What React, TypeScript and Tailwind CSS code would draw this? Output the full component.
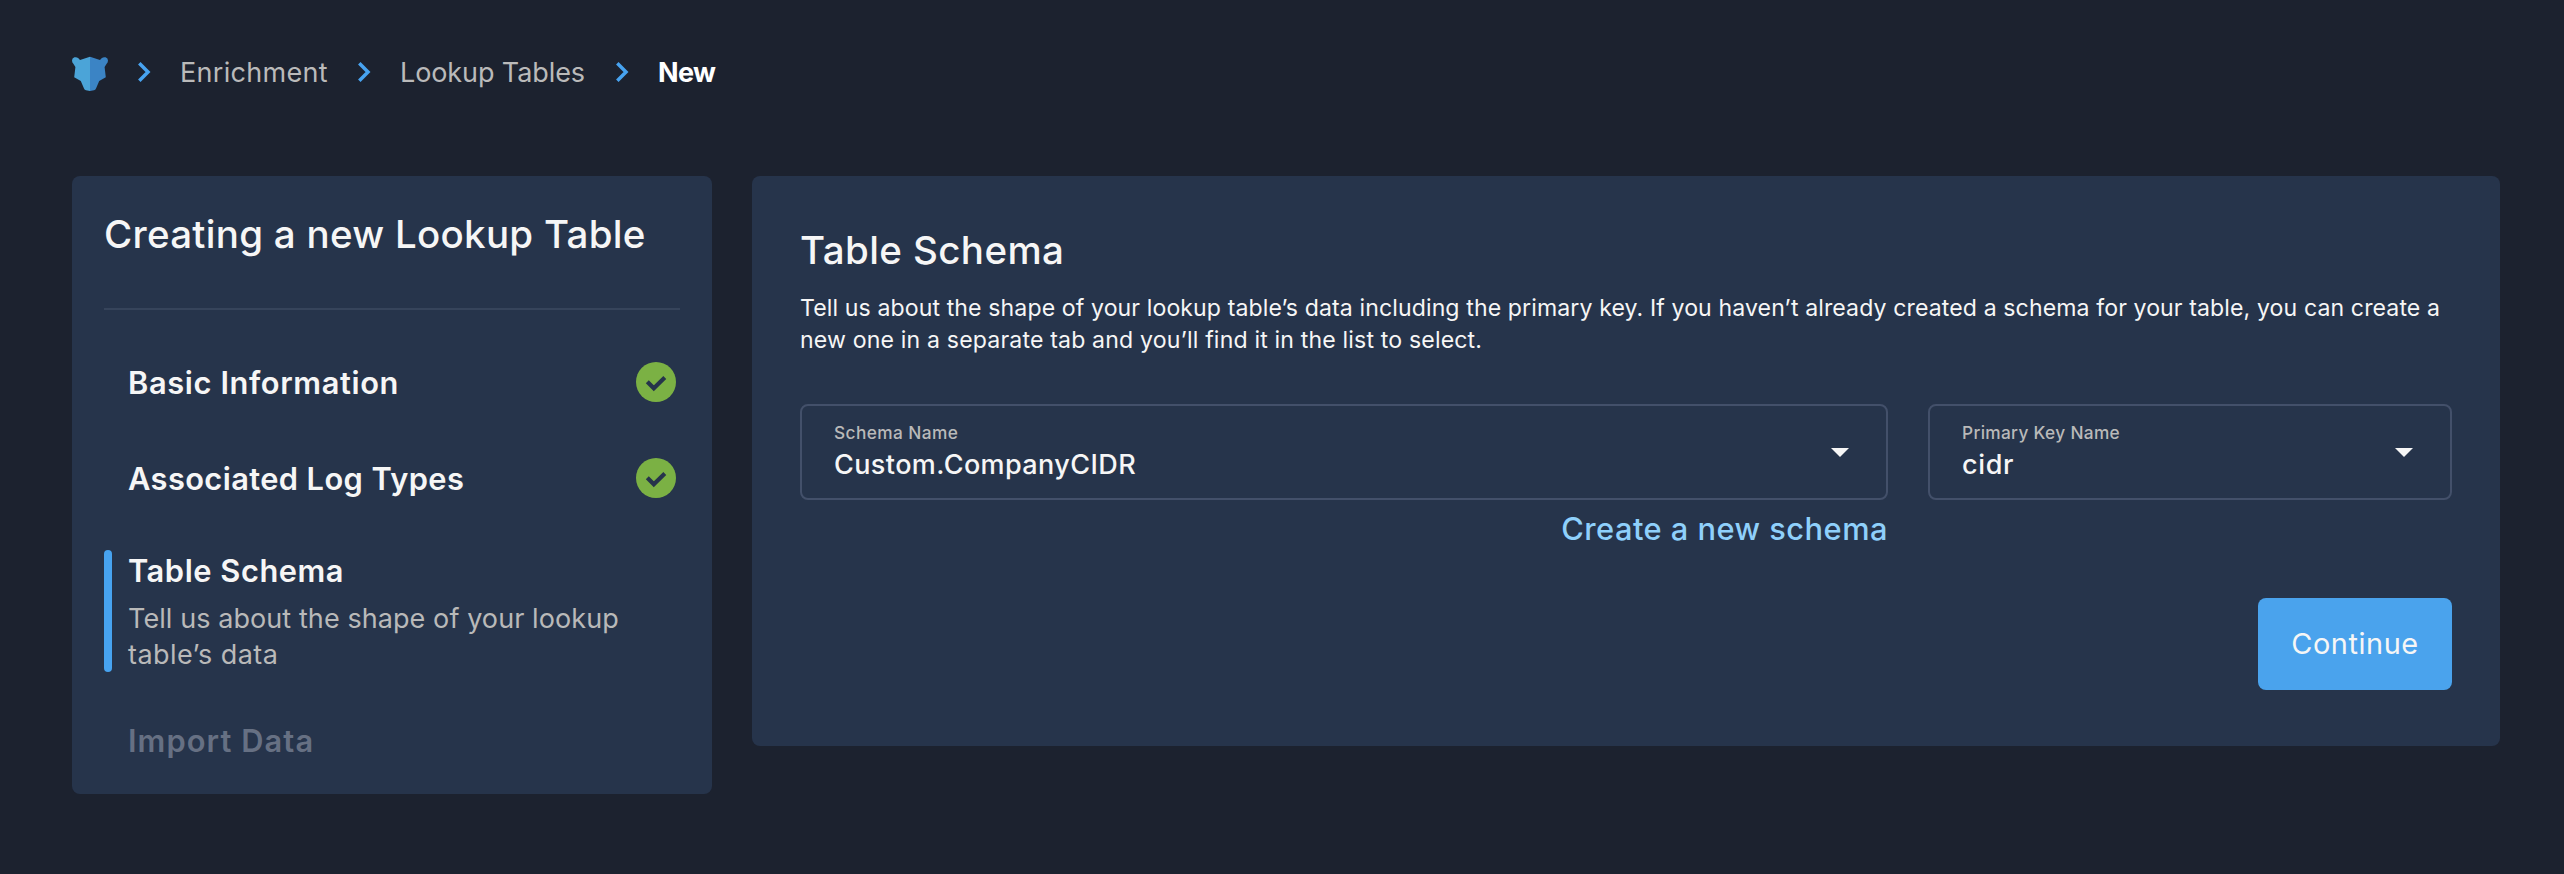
import type { ReactNode } from "react";

function PantherLogo() {
  return (
    <svg className="mt-1 h-9 w-9" viewBox="0 0 36 36">
      <path
        d="M18 0.8 L8 3.9 L6.4 2.2 Q4.6 0.8 2.4 1.3 Q0 2 0 4.4 Q0.2 6.6 1.2 7.6 L3.4 11 L3 14.5 L2.2 21.2 L8.8 25 L12 32.6 Q12.6 34 14 34.3 L18 35 Z"
        fill="#4ba4d8"
      />
      <path
        d="M18 0.8 L28 3.9 L29.6 2.2 Q31.4 0.8 33.6 1.3 Q36 2 36 4.4 Q35.8 6.6 34.8 7.6 L32.6 11 L33 14.5 L33.8 21.2 L27.2 25 L24 32.6 Q23.4 34 22 34.3 L18 35 Z"
        fill="#3b84c5"
      />
    </svg>
  );
}

function Chevron() {
  return (
    <svg className="mr-[29px] ml-[30px] h-5 w-[13px]" viewBox="0 0 13 20" fill="none">
      <path d="M1.3 1.3 L10 10 L1.3 18.7" stroke="#47a3f0" strokeWidth="3.5" />
    </svg>
  );
}

function DoneIcon() {
  return (
    <svg className="h-10 w-10" viewBox="0 0 40 40" fill="none">
      <circle cx="20" cy="20" r="20" fill="#7bb144" />
      <path d="M11.3 19.8 L17.8 26.2 L28.8 15.6" stroke="#26344b" strokeWidth="4.2" />
    </svg>
  );
}

function SelectField({ label, value }: { label: ReactNode; value: ReactNode }) {
  return (
    <div className="flex h-24 items-center justify-between rounded-lg border-2 border-[#43506a] pr-[37px] pl-8">
      <div className="flex flex-col gap-0.5 self-start pt-[15px]">
        {label}
        {value}
      </div>
      <svg className="mt-px h-[9px] w-[18px]" viewBox="0 0 18 9">
        <path d="M0 0 H18 L9 9 Z" fill="#f6f6f6" />
      </svg>
    </div>
  );
}

export default function App() {
  return (
    <div className="h-[874px] w-[2564px] bg-[#1c222f] px-[72px] pt-[54px] pr-16 font-['Inter',sans-serif] whitespace-nowrap text-[#f6f6f6]">
      <nav className="flex h-9 items-center text-[27px] leading-9 text-[#bababa]">
        <PantherLogo />
        <Chevron />
        <span className="w-[148px] pt-0.5 tracking-[0.3px]">Enrichment</span>
        <Chevron />
        <span className="w-[186px] pt-0.5 tracking-[-0.1px]">Lookup Tables</span>
        <Chevron />
        <span className="pt-0.5 font-bold tracking-[-0.6px] text-white">New</span>
      </nav>

      <main className="mt-[86px] flex items-start gap-10">
        <aside className="h-[618px] w-[640px] rounded-lg bg-[#26344b] px-8 pt-[34px]">
          <h1 className="text-[38.5px] leading-[48px] font-medium tracking-[0.28px]">Creating a new Lookup Table</h1>
          <hr className="mt-[50px] h-0.5 border-0 bg-[#36445b]" />
          <div className="mt-[52px] flex h-10 items-center justify-between pr-1 pl-6">
            <span className="pt-0.5 text-[30.8px] leading-10 font-semibold tracking-[0.62px]">Basic Information</span>
            <DoneIcon />
          </div>
          <div className="mt-14 flex h-10 items-center justify-between pr-1 pl-6">
            <span className="pt-0.5 text-[30.8px] leading-10 font-semibold tracking-[0.4px]">Associated Log Types</span>
            <DoneIcon />
          </div>
          <div className="mt-[52px] flex h-[122px] gap-4">
            <div className="w-2 rounded-full bg-[#47a3f0]" />
            <div className="pt-px">
              <h2 className="text-[30.8px] leading-10 font-semibold tracking-[0.55px]">Table Schema</h2>
              <p className="mt-2.5 text-[27px] leading-9 text-[#b9b9b9]">
                <span className="block tracking-[0.08px]">Tell us about the shape of your lookup</span>
                <span className="block tracking-[0.45px]">table’s data</span>
              </p>
            </div>
          </div>
          <div className="mt-[49px] pl-6 text-[30.8px] leading-10 font-semibold tracking-[1.08px] text-[#667083]">
            Import Data
          </div>
        </aside>

        <section className="h-[570px] w-[1748px] rounded-lg bg-[#26344b] px-12 pt-[50px]">
          <h2 className="text-[38.5px] leading-[48px] font-medium tracking-[0.4px]">Table Schema</h2>
          <p className="mt-[18px] text-[23.1px] leading-8">
            <span className="block tracking-[0.103px]">
              Tell us about the shape of your lookup table’s data including the primary key. If you haven’t already created a schema for your table, you can create a
            </span>
            <span className="block tracking-[0.16px]">new one in a separate tab and you’ll find it in the list to select.</span>
          </p>
          <div className="mt-12 grid grid-cols-[1088px_524px] gap-10">
            <div>
              <SelectField
                label={<span className="text-[17.3px] leading-6 font-medium tracking-[0.4px] text-[#b9b9b9]">Schema Name</span>}
                value={<span className="text-[27px] leading-9 font-medium tracking-[0.41px]">Custom.CompanyCIDR</span>}
              />
              <a className="mt-[9px] block text-right text-[30.8px] leading-10 font-medium tracking-[0.48px] text-[#8fd0fb]">
                Create a new schema
              </a>
            </div>
            <SelectField
              label={<span className="text-[17.3px] leading-6 font-medium tracking-[0.32px] text-[#b9b9b9]">Primary Key Name</span>}
              value={<span className="text-[27px] leading-9 font-medium tracking-[0.66px]">cidr</span>}
            />
          </div>
          <div className="mt-[49px] flex justify-end">
            <button className="flex h-[92px] w-[194px] items-center justify-center rounded-lg bg-[#4aa3ed] text-[28.9px] leading-10 tracking-[0.57px]">
              Continue
            </button>
          </div>
        </section>
      </main>
    </div>
  );
}
